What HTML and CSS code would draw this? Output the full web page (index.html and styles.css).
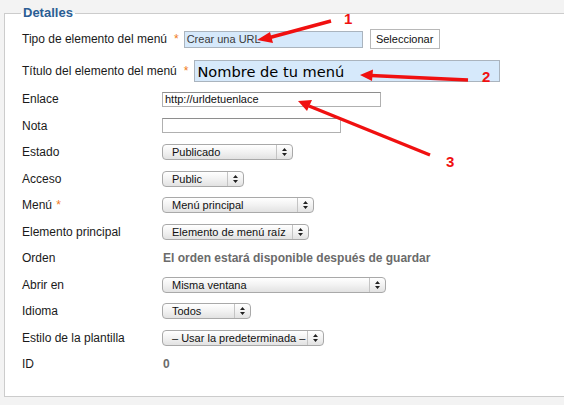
FILE: index.html
```html
<!DOCTYPE html>
<html lang="es">
<head>
<meta charset="utf-8">
<title>Detalles</title>
<link rel="stylesheet" href="styles.css">
</head>
<body>
<fieldset class="panel">
  <legend>Detalles</legend>
  <div class="row row-type">
    <span class="lbl-inline">Tipo de elemento del menú</span><span class="star">*</span>
    <span class="box box-blue box-type">Crear una URL</span>
    <span class="btn">Seleccionar</span>
  </div>
  <div class="row row-title">
    <span class="lbl-inline">Título del elemento del menú</span><span class="star">*</span>
    <span class="box box-blue box-title">Nombre de tu menú</span>
  </div>
  <div class="row"><span class="lbl">Enlace</span><span class="box box-text w-219">http://urldetuenlace</span></div>
  <div class="row"><span class="lbl">Nota</span><span class="box box-text w-179"></span></div>
  <div class="row"><span class="lbl">Estado</span><span class="select w-131"><span class="sel-text">Publicado</span><span class="sel-arrow"><svg width="5" height="8" viewBox="0 0 5 8"><path d="M2.5 0 L5 3 L0 3 Z M2.5 8 L5 5 L0 5 Z" fill="#222"/></svg></span></span></div>
  <div class="row"><span class="lbl">Acceso</span><span class="select w-82"><span class="sel-text">Public</span><span class="sel-arrow"><svg width="5" height="8" viewBox="0 0 5 8"><path d="M2.5 0 L5 3 L0 3 Z M2.5 8 L5 5 L0 5 Z" fill="#222"/></svg></span></span></div>
  <div class="row"><span class="lbl">Menú <span class="star star-tight">*</span></span><span class="select w-152"><span class="sel-text">Menú principal</span><span class="sel-arrow"><svg width="5" height="8" viewBox="0 0 5 8"><path d="M2.5 0 L5 3 L0 3 Z M2.5 8 L5 5 L0 5 Z" fill="#222"/></svg></span></span></div>
  <div class="row"><span class="lbl">Elemento principal</span><span class="select w-147"><span class="sel-text">Elemento de menú raíz</span><span class="sel-arrow"><svg width="5" height="8" viewBox="0 0 5 8"><path d="M2.5 0 L5 3 L0 3 Z M2.5 8 L5 5 L0 5 Z" fill="#222"/></svg></span></span></div>
  <div class="row"><span class="lbl">Orden</span><span class="note">El orden estará disponible después de guardar</span></div>
  <div class="row"><span class="lbl">Abrir en</span><span class="select w-224"><span class="sel-text">Misma ventana</span><span class="sel-arrow"><svg width="5" height="8" viewBox="0 0 5 8"><path d="M2.5 0 L5 3 L0 3 Z M2.5 8 L5 5 L0 5 Z" fill="#222"/></svg></span></span></div>
  <div class="row"><span class="lbl">Idioma</span><span class="select w-89"><span class="sel-text">Todos</span><span class="sel-arrow"><svg width="5" height="8" viewBox="0 0 5 8"><path d="M2.5 0 L5 3 L0 3 Z M2.5 8 L5 5 L0 5 Z" fill="#222"/></svg></span></span></div>
  <div class="row"><span class="lbl">Estilo de la plantilla</span><span class="select w-162"><span class="sel-text">– Usar la predeterminada –</span><span class="sel-arrow"><svg width="5" height="8" viewBox="0 0 5 8"><path d="M2.5 0 L5 3 L0 3 Z M2.5 8 L5 5 L0 5 Z" fill="#222"/></svg></span></span></div>
  <div class="row"><span class="lbl">ID</span><span class="note">0</span></div>
</fieldset>
<svg class="marks" width="564" height="405" viewBox="0 0 564 405">
  <g stroke="#f01010" stroke-width="3.5" stroke-linecap="butt" fill="#f01010">
    <line x1="331" y1="21" x2="268" y2="38"/>
    <path d="M257 40 L270 32 L273 43 Z" stroke="none"/>
    <line x1="468" y1="80" x2="371" y2="75.5"/>
    <path d="M360 75 L373 69.5 L372 81 Z" stroke="none"/>
    <line x1="430" y1="155" x2="309" y2="106"/>
    <path d="M298 101 L312 100 L307 111 Z" stroke="none"/>
  </g>
  <g class="num" fill="#f01010">
    <text x="344" y="24">1</text>
    <text x="482" y="82">2</text>
    <text x="446" y="167">3</text>
  </g>
</svg>
</body>
</html>
```
FILE: styles.css
```css
html, body {
  margin: 0;
  padding: 0;
}
body {
  background: #f3f3f3;
  width: 564px;
  height: 405px;
  overflow: hidden;
  position: relative;
  font-family: "Liberation Sans", Arial, sans-serif;
  font-size: 12px;
  color: #1a1a1a;
}
.panel {
  margin: 5px 0 0 4px;
  padding: 0 0 16px 17px;
  width: 600px;
  border: 1px solid #cccccc;
  background: #ffffff;
  box-sizing: border-box;
  height: 392px;
}
.panel legend {
  font-family: "Liberation Sans", Arial, sans-serif;
  font-weight: bold;
  font-size: 13px;
  line-height: 16px;
  color: #2b5e95;
  padding: 0 2px;
  margin-left: -1px;
}
.row {
  display: flex;
  align-items: center;
  height: 26.5px;
}
.row-type {
  height: 20px;
  margin-top: 8px;
}
.row-title {
  height: 22px;
  margin-top: 11px;
  margin-bottom: 4px;
}
.lbl {
  width: 140px;
  flex: none;
}
.lbl-inline {
  flex: none;
}
.star {
  color: #f07a1a;
  margin-left: 7px;
}
.star-tight {
  margin-left: 1px;
}
.row-type .star { margin-right: 5px; }
.row-title .star { margin-right: 6px; }
.box {
  box-sizing: border-box;
  display: flex;
  align-items: center;
  font-family: "Lucida Grande", "Liberation Sans", Arial, sans-serif;
  font-size: 11px;
  color: #111;
}
.box-blue {
  background: #d6e9fb;
  border: 1px solid #aab4be;
}
.box-type {
  width: 179px;
  height: 17px;
  padding-left: 2px;
  color: #3a3a3a;
}
.box-title {
  width: 306px;
  height: 22px;
  padding-left: 2px;
  font-family: "DejaVu Sans", Verdana, sans-serif;
  font-size: 14.6px;
  color: #000;
}
.box-text {
  height: 15px;
  border: 1px solid #b0b0b0;
  border-top-color: #8e8e8e;
  background: #fff;
  padding-left: 2px;
}
.w-219 { width: 219px; }
.w-179 { width: 179px; }
.btn {
  box-sizing: border-box;
  margin-left: 7px;
  width: 70px;
  height: 20px;
  border: 1px solid #b8b8b8;
  background: #fff;
  display: flex;
  align-items: center;
  justify-content: center;
  font-family: "Lucida Grande", "Liberation Sans", Arial, sans-serif;
  font-size: 11px;
  color: #111;
}
.select {
  box-sizing: border-box;
  display: flex;
  height: 16px;
  border: 1px solid #a9a9a9;
  border-radius: 4px;
  background: linear-gradient(#ffffff, #f2f2f2 50%, #e2e2e2);
  font-family: "Lucida Grande", "Liberation Sans", Arial, sans-serif;
  font-size: 11px;
  color: #111;
  overflow: hidden;
}
.sel-text {
  flex: 1;
  padding-left: 9px;
  display: flex;
  align-items: center;
  white-space: nowrap;
  overflow: hidden;
}
.sel-arrow {
  flex: none;
  width: 15px;
  border-left: 1px solid #c4c4c4;
  display: flex;
  align-items: center;
  justify-content: center;
}
.w-131 { width: 131px; }
.w-82 { width: 82px; }
.w-152 { width: 152px; }
.w-147 { width: 147px; }
.w-224 { width: 224px; }
.w-89 { width: 89px; }
.w-162 { width: 162px; }
.note {
  font-weight: bold;
  font-size: 12px;
  color: #6b6b6b;
  padding-left: 1px;
}
.marks {
  position: absolute;
  left: 0;
  top: 0;
  pointer-events: none;
}
.num {
  font-family: "Liberation Sans", Arial, sans-serif;
  font-weight: bold;
  font-size: 15px;
}
```
